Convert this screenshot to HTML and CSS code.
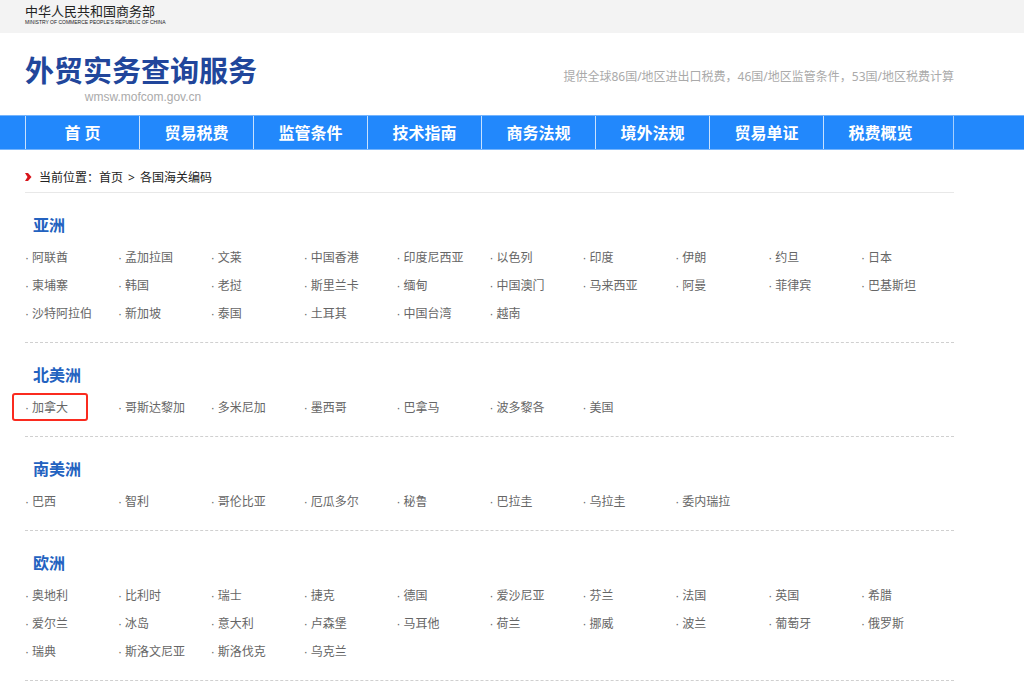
FILE: index.html
```
<!DOCTYPE html>
<html lang="zh-CN">

<head>
  <meta charset="UTF-8">
  <meta name="viewport" content="width=device-width, initial-scale=1.0">
  <title>外贸实务查询服务</title>
  <link rel="stylesheet" href="styles.css">
</head>

<body>
  <div class="topbar">
    <div class="ministry">中华人民共和国商务部</div>
    <div class="ministry-en">MINISTRY OF COMMERCE PEOPLE'S REPUBLIC OF CHINA</div>
  </div>

  <header class="header">
    <div class="brand">
      <h1>外贸实务查询服务</h1>
      <p class="site-url">wmsw.mofcom.gov.cn</p>
    </div>
    <p class="slogan">提供全球86国/地区进出口税费，46国/地区监管条件，53国/地区税费计算</p>
  </header>

  <nav class="nav">
    <ul class="nav-list">
      <li><a href="#">首 页</a></li>
      <li><a href="#">贸易税费</a></li>
      <li><a href="#">监管条件</a></li>
      <li><a href="#">技术指南</a></li>
      <li><a href="#">商务法规</a></li>
      <li><a href="#">境外法规</a></li>
      <li><a href="#">贸易单证</a></li>
      <li><a href="#">税费概览</a></li>
    </ul>
  </nav>

  <main class="content">
    <div class="breadcrumb">
      <svg class="arrow" width="7" height="8" viewBox="0 0 7 8">
        <path d="M0 0h3l3.500 4L3 8H0l2.500-4z" fill="#d8141b" />
      </svg>
      <span>当前位置：</span>
      <a href="#">首页</a>
      <span class="sep">&gt;</span>
      <a href="#">各国海关编码</a>
    </div>

    <!-- Countries by continent -->
    <section class="region">
      <h2>亚洲</h2>
      <ul class="countries">
        <li><a href="#">阿联酋</a></li>
        <li><a href="#">孟加拉国</a></li>
        <li><a href="#">文莱</a></li>
        <li><a href="#">中国香港</a></li>
        <li><a href="#">印度尼西亚</a></li>
        <li><a href="#">以色列</a></li>
        <li><a href="#">印度</a></li>
        <li><a href="#">伊朗</a></li>
        <li><a href="#">约旦</a></li>
        <li><a href="#">日本</a></li>
        <li><a href="#">柬埔寨</a></li>
        <li><a href="#">韩国</a></li>
        <li><a href="#">老挝</a></li>
        <li><a href="#">斯里兰卡</a></li>
        <li><a href="#">缅甸</a></li>
        <li><a href="#">中国澳门</a></li>
        <li><a href="#">马来西亚</a></li>
        <li><a href="#">阿曼</a></li>
        <li><a href="#">菲律宾</a></li>
        <li><a href="#">巴基斯坦</a></li>
        <li><a href="#">沙特阿拉伯</a></li>
        <li><a href="#">新加坡</a></li>
        <li><a href="#">泰国</a></li>
        <li><a href="#">土耳其</a></li>
        <li><a href="#">中国台湾</a></li>
        <li><a href="#">越南</a></li>
      </ul>
    </section>

    <section class="region">
      <h2>北美洲</h2>
      <ul class="countries">
        <li class="marked"><a href="#">加拿大</a></li>
        <li><a href="#">哥斯达黎加</a></li>
        <li><a href="#">多米尼加</a></li>
        <li><a href="#">墨西哥</a></li>
        <li><a href="#">巴拿马</a></li>
        <li><a href="#">波多黎各</a></li>
        <li><a href="#">美国</a></li>
      </ul>
    </section>

    <section class="region">
      <h2>南美洲</h2>
      <ul class="countries">
        <li><a href="#">巴西</a></li>
        <li><a href="#">智利</a></li>
        <li><a href="#">哥伦比亚</a></li>
        <li><a href="#">厄瓜多尔</a></li>
        <li><a href="#">秘鲁</a></li>
        <li><a href="#">巴拉圭</a></li>
        <li><a href="#">乌拉圭</a></li>
        <li><a href="#">委内瑞拉</a></li>
      </ul>
    </section>

    <section class="region">
      <h2>欧洲</h2>
      <ul class="countries">
        <li><a href="#">奥地利</a></li>
        <li><a href="#">比利时</a></li>
        <li><a href="#">瑞士</a></li>
        <li><a href="#">捷克</a></li>
        <li><a href="#">德国</a></li>
        <li><a href="#">爱沙尼亚</a></li>
        <li><a href="#">芬兰</a></li>
        <li><a href="#">法国</a></li>
        <li><a href="#">英国</a></li>
        <li><a href="#">希腊</a></li>
        <li><a href="#">爱尔兰</a></li>
        <li><a href="#">冰岛</a></li>
        <li><a href="#">意大利</a></li>
        <li><a href="#">卢森堡</a></li>
        <li><a href="#">马耳他</a></li>
        <li><a href="#">荷兰</a></li>
        <li><a href="#">挪威</a></li>
        <li><a href="#">波兰</a></li>
        <li><a href="#">葡萄牙</a></li>
        <li><a href="#">俄罗斯</a></li>
        <li><a href="#">瑞典</a></li>
        <li><a href="#">斯洛文尼亚</a></li>
        <li><a href="#">斯洛伐克</a></li>
        <li><a href="#">乌克兰</a></li>
      </ul>
    </section>
  </main>
</body>

</html>
```
FILE: styles.css
```
*,
*::before,
*::after {
  box-sizing: border-box;
}

body {
  margin: 0;
  background-color: #fff;
  color: #666;
  font-family: "Noto Sans", "Noto Sans CJK SC", sans-serif;
  font-size: 12px;
}

h1,
h2,
p,
ul {
  margin: 0;
  padding: 0;
}

ul {
  list-style: none;
}

a {
  color: inherit;
  text-decoration: none;
}

.topbar,
.header,
.nav,
.content {
  padding-left: 25px;
  padding-right: 70px;
}

.topbar {
  height: 33px;
  padding-top: 3px;
  background-color: #f3f3f3;
  color: #222;
}

.ministry {
  font-size: 13px;
  line-height: 16px;
}

.ministry-en {
  font-family: "Liberation Sans", Arial, sans-serif;
  font-size: 5px;
  line-height: 6px;
}

.header {
  display: flex;
  justify-content: space-between;
  align-items: center;
  height: 82px;
  padding-top: 6px;
}

.brand {
  padding-top: 4px;
}

.brand h1 {
  color: #21469b;
  font-size: 29px;
  line-height: 36px;
}

.site-url {
  padding-left: 4px;
  color: #aaa;
  font-family: "Liberation Sans", Arial, sans-serif;
  font-size: 12px;
  line-height: 16px;
  text-align: center;
}

.slogan {
  color: #aaa;
  line-height: 20px;
}

.nav {
  background-color: #2288fc;
  border-top: 1px solid #74b4fd;
  border-bottom: 1px solid #74b4fd;
}

.nav-list {
  display: flex;
  border-right: 1px solid #a6cffe;
}

.nav-list li {
  width: 114px;
  border-left: 1px solid #c8e1fe;
}

.nav-list a {
  display: block;
  padding-top: 1px;
  color: #fff;
  font-size: 16px;
  font-weight: bold;
  line-height: 32px;
  text-align: center;
}

.breadcrumb {
  display: flex;
  align-items: center;
  height: 43px;
  padding-top: 12px;
  border-bottom: 1px solid #e8e8e8;
  color: #222;
}

.arrow {
  margin-right: 7px;
}

.sep {
  margin: 0 5px;
}

.region {
  padding: 20px 0 14px;
  border-bottom: 1px dashed #d0d0d0;
}

.region h2 {
  margin-bottom: 7px;
  padding-left: 8px;
  color: #2362c0;
  font-size: 16px;
  line-height: 24px;
}

.countries {
  display: grid;
  grid-template-columns: repeat(10, 1fr);
}

.countries li {
  position: relative;
  display: flex;
  line-height: 28px;
  white-space: nowrap;
}

.countries li::before {
  content: "·";
  width: 7px;
  font-family: "Liberation Sans", Arial, sans-serif;
}

/* red frame around the selected country */
.marked::after {
  content: "";
  position: absolute;
  top: -1px;
  left: -13px;
  width: 76px;
  height: 28px;
  border: 2px solid #fa2b1f;
  border-radius: 3px;
}
```
